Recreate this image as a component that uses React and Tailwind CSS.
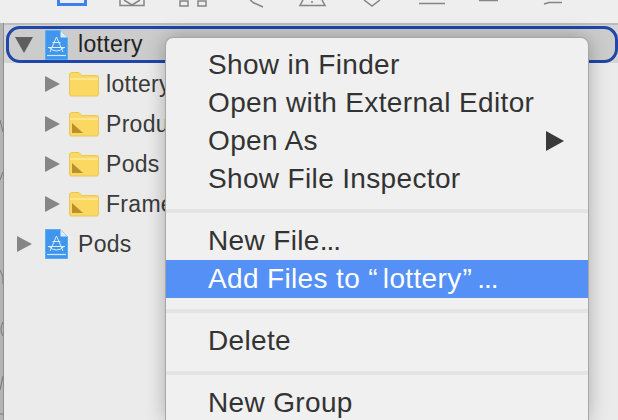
import { Fragment } from 'react';

const FONT = "font-['Liberation_Sans',Arial,sans-serif]";

const CHILDREN = [
  { name: 'lottery', plain: true },
  { name: 'Products' },
  { name: 'Pods' },
  { name: 'Frameworks' },
];

function AddFilesLabel() {
  return (
    <>
      Add Files to “<span className="ml-[5px]">lottery</span><span className="ml-[1px]">”</span>
      <span className="ml-[5px] tracking-[-1px]">...</span>
    </>
  );
}

const MENU = [
  [
    { label: 'Show in Finder' },
    { label: 'Open with External Editor' },
    { label: 'Open As', arrow: true },
    { label: 'Show File Inspector' },
  ],
  [
    { label: <>New File<span className="tracking-[-1px]">...</span></> },
    { label: <AddFilesLabel />, active: true },
  ],
  [{ label: 'Delete' }],
  [{ label: 'New Group' }],
];

function Disclosure({ open }) {
  if (open) {
    return (
      <svg width="18" height="16" viewBox="0 0 18 16" className="shrink-0">
        <path d="M0 0h18L9 16z" fill="#5e5e5e" />
      </svg>
    );
  }
  return (
    <svg width="15" height="16" viewBox="0 0 15 16" className="shrink-0">
      <path d="M0 0l15 8-15 8z" fill="#868686" />
    </svg>
  );
}

function ProjectIcon() {
  return (
    <svg width="23" height="30" viewBox="0 0 23 30" className="shrink-0">
      <path d="M.5.5h15l7 7v22H.5z" fill="#3f96ec" stroke="#58aef2" />
      <path d="M15.500.5v7h7z" fill="#dcecfa" />
      <path d="M2 25.500h19" stroke="#cfe8fc" strokeWidth="1.200" />
      <g stroke="#dceefd" strokeWidth="1" fill="none">
        <path d="M11.500 7L5 22M11.500 7L18 22M3 17.500h17M7.500 12.500h8" />
        <path d="M4 17.500q7.500 7 15 0" />
      </g>
    </svg>
  );
}

function FolderIcon({ plain }) {
  return (
    <svg width="30" height="25" viewBox="0 0 30 25" className="shrink-0">
      <path d="M.5 3Q.5.5 3 .5h7l3 3h14.500q2 0 2 2V22q0 2-2 2h-25q-2 0-2-2z" fill="#fbd862" stroke="#e8c65a" />
      <path d="M1 7h28" stroke="#fdeaa4" strokeWidth="1.500" />
      {!plain && <path d="M3 21V11l11 10z" fill="#b98f2f" />}
    </svg>
  );
}

function ToolbarIcons() {
  return (
    <svg width="618" height="23" viewBox="0 0 618 23" className="block">
      <path d="M58.500 0v4.500h27V0" fill="none" stroke="#3f80ee" strokeWidth="3" />
      <g fill="none" stroke="#858585" strokeWidth="1.500">
        <path d="M120 0v5.500h24V0M124 0l8 5 8-5" />
        <path d="M180 1h8v5h-8zM198 1h8v5h-8z" />
        <path d="M250 0l4 3 9 4" />
        <path d="M303 0l-3 5.500h25L322 0" />
        <path d="M364 0l8 6 8-6" />
        <path d="M419 3.500h26" />
        <path d="M479 .5h19" />
        <path d="M544 4l5-1.500h13" />
      </g>
      <circle cx="312" cy="2" r="1" fill="#858585" />
    </svg>
  );
}

function BehindStrip() {
  return (
    <div className="w-[4px] shrink-0 overflow-hidden border-r border-[#8f8f8f] bg-[#b4b4b4]">
      <svg width="4" height="420" viewBox="0 0 4 420" className="block">
        <g fill="none" stroke="#777777" strokeWidth="1">
          <path d="M0 120l3 12M0 180l3-8M0 270q4 6 3 14M3 322q-4 8 0 14M3 376l-3 14M0 414h3" />
        </g>
      </svg>
    </div>
  );
}

function TreeRow({ indent, children }) {
  return <div className={`flex h-10 items-center ${indent}`}>{children}</div>;
}

export default function App() {
  return (
    <div className={`relative h-[420px] w-[618px] overflow-hidden bg-[#ebebeb] ${FONT}`}>
      <div className="flex h-full">
        <BehindStrip />

        <div className="flex min-w-0 flex-1 flex-col">
          <div className="-ml-[4px] h-[23px] shrink-0 bg-[#eeeeee]">
            <ToolbarIcons />
          </div>
          <div className="h-[2px] shrink-0 bg-[#bdbdbd]" />

          {/* selected project row */}
          <div className="bg-[#d4d4d4] pl-[2px] pt-[1px]">
            <div className="flex h-[37px] items-center rounded-[14px] border-[3px] border-[#1f46a8] bg-[#cccccc] pl-[6px]">
              <Disclosure open />
              <div className="ml-[12px]"><ProjectIcon /></div>
              <span className="ml-[10px] text-[23px] tracking-[0.3px] text-[#222222]">lottery</span>
            </div>
          </div>

          <div className="mt-[1px] flex flex-col">
            {CHILDREN.map((c) => (
              <TreeRow key={c.name} indent="pl-[41px] gap-[9px]">
                <Disclosure />
                <FolderIcon plain={c.plain} />
                <span className="-ml-[2px] text-[23px] tracking-[0.3px] whitespace-nowrap text-[#3a3a3a]">{c.name}</span>
              </TreeRow>
            ))}
            <TreeRow indent="pl-[13px] gap-[13px]">
              <Disclosure />
              <ProjectIcon />
              <span className="-ml-[3px] text-[23px] tracking-[0.3px] text-[#3a3a3a]">Pods</span>
            </TreeRow>
          </div>
        </div>
      </div>

      {/* context menu */}
      <div className="absolute top-[38px] left-[166px] h-[382px] w-[422px] rounded-t-[7px] bg-[#f0f0f0] pt-[8px] text-[28px] tracking-[0.35px] text-[#333333] shadow-[0_0_0_1px_#a6a6a6,0_0_20px_rgba(0,0,0,0.3)]">
        {MENU.map((group, i) => (
          <Fragment key={i}>
            {i > 0 && <div className="mt-[11px] mb-[9px] h-[4px] bg-[#e4e4e4]" />}
            {group.map((item, j) => (
              <div
                key={j}
                className={`flex h-[38px] items-center justify-between pl-[42px] pr-[24px] whitespace-nowrap ${item.active ? 'bg-[#5590f6] text-white' : ''}`}
              >
                <span className="leading-none">{item.label}</span>
                {item.arrow && (
                  <svg width="18" height="20" viewBox="0 0 18 20">
                    <path d="M0 0l18 10L0 20z" fill="#3a3a3a" />
                  </svg>
                )}
              </div>
            ))}
          </Fragment>
        ))}
      </div>
    </div>
  );
}
